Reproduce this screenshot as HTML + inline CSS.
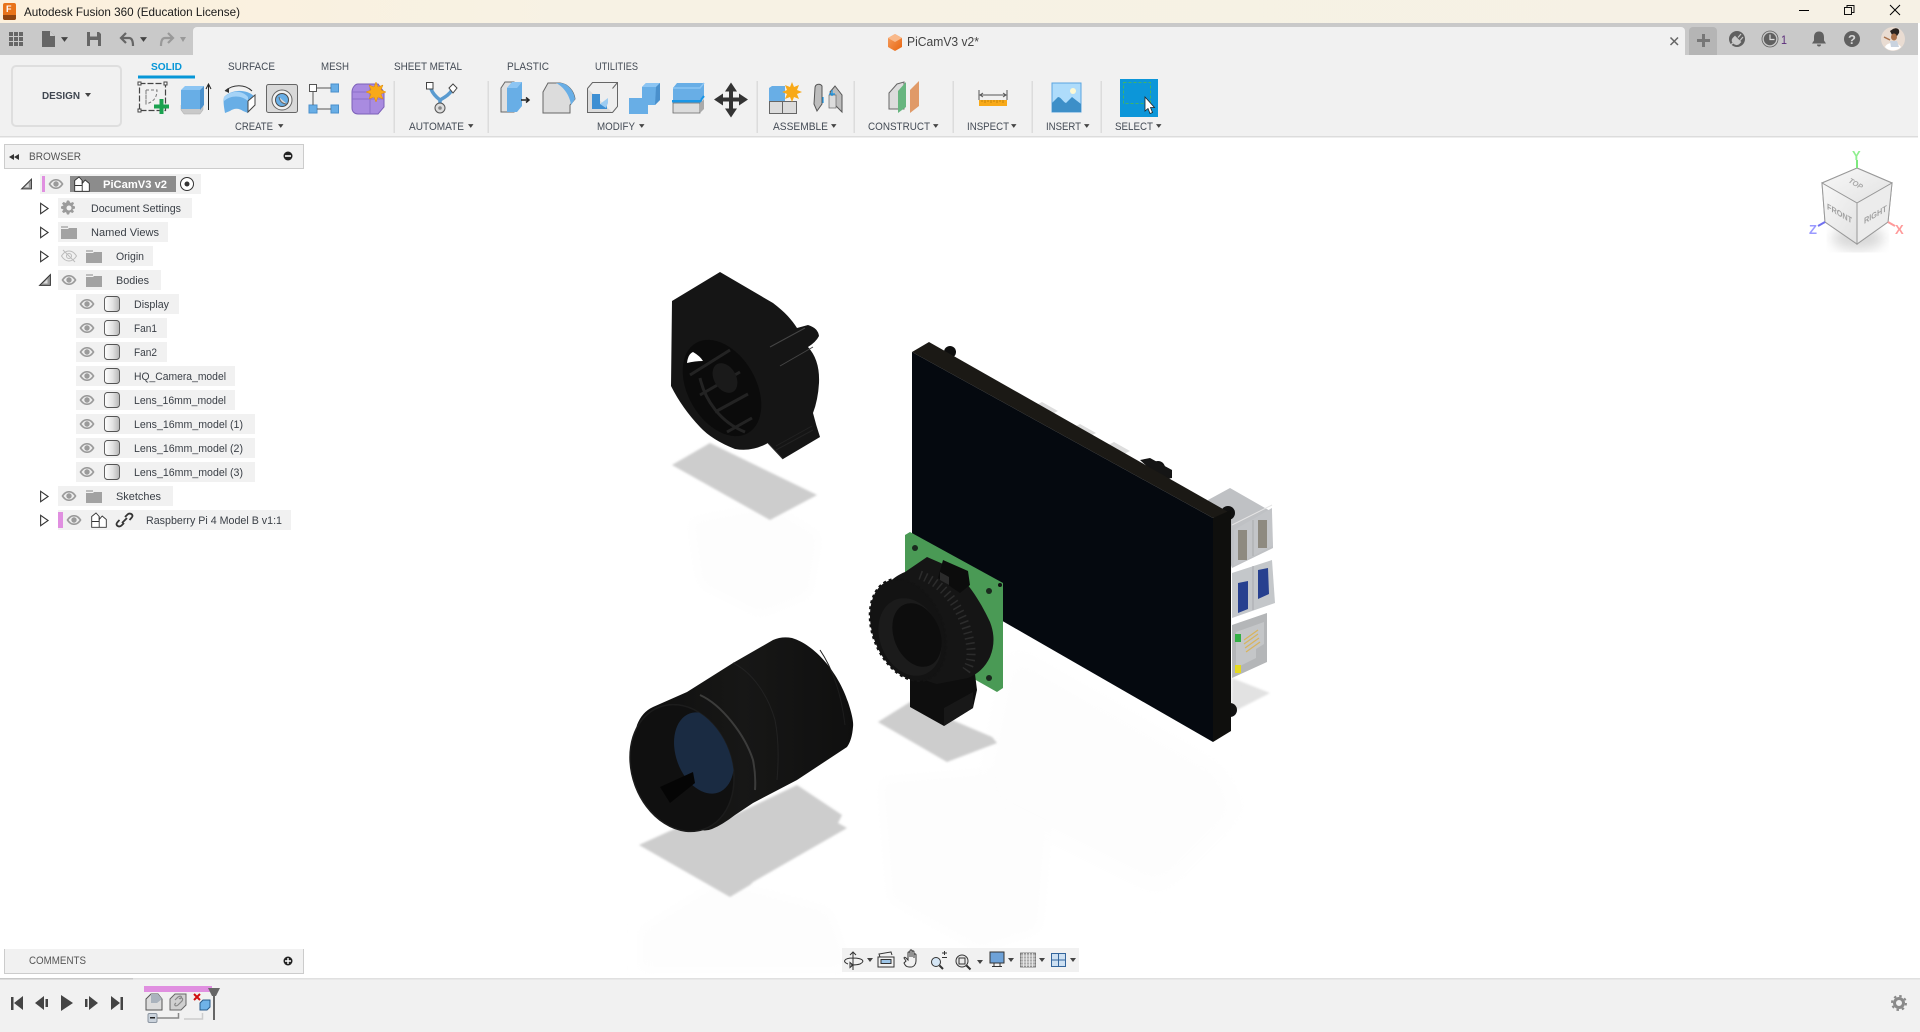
<!DOCTYPE html>
<html lang="en"><head><meta charset="utf-8"><title>Autodesk Fusion 360</title>
<style>
html,body{margin:0;padding:0;background:#fff;width:1920px;height:1032px;overflow:hidden}
svg{display:block}
text{font-family:"Liberation Sans",sans-serif;font-size:11px;fill:#3f4650}
.r{font-size:11px;fill:#444b55}
.b{font-size:11px;fill:#3a3f46}
</style></head><body>
<svg xmlns="http://www.w3.org/2000/svg" width="1920" height="1032" viewBox="0 0 1920 1032">
<defs>
<linearGradient id="tb" x1="0" x2="1" y1="0" y2="0"><stop offset="0" stop-color="#fcf0dc"/><stop offset=".3" stop-color="#f7f2e4"/><stop offset="1" stop-color="#f6f1e5"/></linearGradient>
<linearGradient id="cyl" x1="0" x2="1" y1="0" y2="0"><stop offset="0" stop-color="#fff"/><stop offset=".55" stop-color="#e2e2e2"/><stop offset="1" stop-color="#b5b5b5"/></linearGradient>
<linearGradient id="cf" x1="0" x2="1" y1="0" y2="1"><stop offset="0" stop-color="#f8f8f8"/><stop offset="1" stop-color="#e2e2e2"/></linearGradient>
<linearGradient id="cube" x1="0" y1="0" x2="1" y2="1"><stop offset="0" stop-color="#f6a062"/><stop offset="1" stop-color="#e8650f"/></linearGradient>
<linearGradient id="lens" x1="0" x2="1" y1="0" y2="0"><stop offset="0" stop-color="#0f0f0f"/><stop offset=".5" stop-color="#171716"/><stop offset="1" stop-color="#0f0f0f"/></linearGradient>
<filter id="s1"><feGaussianBlur stdDeviation="1"/></filter>
<filter id="s6"><feGaussianBlur stdDeviation="6"/></filter>
<filter id="s12"><feGaussianBlur stdDeviation="12"/></filter>
<symbol id="eye" viewBox="0 0 16 16" overflow="visible"><path d="M.5 8C3 4 5.500 3 8 3s5 1 7.500 5C13 12 10.500 13 8 13S3 12 .5 8z" fill="#9b9b9b"/><path d="M2.500 8C4.500 5.300 6 4.600 8 4.600s3.500.7 5.500 3.400C11.500 10.700 10 11.400 8 11.400S4.500 10.700 2.500 8z" fill="#eee"/><circle cx="8" cy="8" r="2.700" fill="#9b9b9b"/></symbol>
<symbol id="body" viewBox="0 0 16 16" overflow="visible"><rect x=".5" y=".5" width="15" height="15" rx="3" fill="url(#cyl)" stroke="#555" stroke-width=".9"/></symbol>
<symbol id="folder" viewBox="0 0 16 13" overflow="visible"><path d="M0 0h7v2H0z" fill="#bdbdbd"/><path d="M0 3h7l1-1h8v11H0z" fill="#a2a2a2"/></symbol>
<symbol id="comp" viewBox="0 0 16 16" overflow="visible"><path d="M.7 4.500 5 1l3.200 3.500v3l3-3.500 4.100 3.500V15.300H.7z" fill="#fff" stroke="#333" stroke-width=".9"/><path d="M8.200 4.500v10.800M.7 9.500h7.500" fill="none" stroke="#333" stroke-width=".9"/></symbol>
<symbol id="tr" viewBox="0 0 10 13" overflow="visible"><path d="M.7.7 9 6.500.7 12.300z" fill="#fff" stroke="#333" stroke-width="1.200"/></symbol>
<symbol id="td" viewBox="0 0 12 12" overflow="visible"><path d="M11.400.6V11.400H.6z" fill="#999" stroke="#333" stroke-width="1"/><path d="M8.500 5 8.500 9.500H4z" fill="#ddd"/></symbol>
<symbol id="arr" viewBox="0 0 6 4" overflow="visible"><path d="M0 0h6L3 4z" fill="#444"/></symbol>
</defs>

<!-- base -->
<rect width="1920" height="1032" fill="#fff"/>
<rect width="1920" height="23" fill="url(#tb)"/>
<rect y="23" width="1918" height="32" fill="#c9c9c9"/>
<rect x="0" y="55" width="1918" height="81" fill="#f1f1f1"/>
<path d="M193 55V31a4 4 0 0 1 4-4H1681a4 4 0 0 1 4 4V55z" fill="#f1f1f1"/>
<rect y="136" width="1918" height="1.500" fill="#dcdcdc"/>

<!-- title bar -->
<rect x="3" y="3" width="13" height="17" rx="2" fill="#e8731a"/><path d="M3 15h13v3a2 2 0 0 1-2 2H5a2 2 0 0 1-2-2z" fill="#8f4410"/>
<text x="6" y="12" style="font-size:9px;font-weight:bold;fill:#fff">F</text>
<text x="24" y="16" textLength="216" lengthAdjust="spacingAndGlyphs" style="font-size:12px;fill:#1a1a1a">Autodesk Fusion 360 (Education License)</text>
<path d="M1799 10.500h10" stroke="#000"/><path d="M1844.500 7.500h7v7h-7z" fill="none" stroke="#111"/><path d="M1847 7.500V5.500h7v7h-2.500" fill="none" stroke="#111"/><path d="M1890 5l10 10M1900 5l-10 10" stroke="#000"/>

<!-- quick access -->
<g fill="#666"><rect x="9" y="32" width="4" height="4"/><rect x="14" y="32" width="4" height="4"/><rect x="19" y="32" width="4" height="4"/><rect x="9" y="37" width="4" height="4"/><rect x="14" y="37" width="4" height="4"/><rect x="19" y="37" width="4" height="4"/><rect x="9" y="42" width="4" height="4"/><rect x="14" y="42" width="4" height="4"/><rect x="19" y="42" width="4" height="4"/></g>
<path d="M42 31h8l5 5v11H42z" fill="#666"/><path d="M50 31v5h5z" fill="#ccc"/><use href="#arr" x="61" y="37" width="7" height="5"/>
<path d="M87 32h12l2 2v12H87z" fill="#666"/><rect x="90" y="32" width="7" height="4.500" fill="#c9c9c9"/><rect x="90" y="40" width="8" height="6" fill="#c9c9c9"/>
<path d="M126 33l-5 5 5 5M121 38h8c3 0 4 3 4 8" fill="none" stroke="#666" stroke-width="2.200"/><use href="#arr" x="140" y="37" width="7" height="5"/>
<path d="M168 33l5 5-5 5M173 38h-8c-3 0-4 3-4 8" fill="none" stroke="#999" stroke-width="2.200"/><path d="M180 37h6l-3 5z" fill="#999"/>

<!-- document tab -->
<path d="M895 34l7 4v9l-7 4-7-4v-9z" fill="url(#cube)"/><path d="M888 38l7 4 7-4-7-4z" fill="#f9b98a"/>
<text x="907" y="46" textLength="72" lengthAdjust="spacingAndGlyphs" style="font-size:12.500px;fill:#444">PiCamV3 v2*</text>
<path d="M1670.500 37.500l7.500 7.500M1678 37.500l-7.500 7.500" stroke="#666" stroke-width="1.500"/>
<path d="M1689 55V31a4 4 0 0 1 4-4h20a4 4 0 0 1 4 4V55z" fill="#b5b5b5"/><path d="M1703.500 34v13M1697 40.500h13" stroke="#777" stroke-width="3"/>
<circle cx="1737" cy="39" r="8" fill="#606060"/><path d="M1741 34l-3 3.500M1743 37l-3 3.500M1735 36.500l5.500 5.500-2 2c-2 1-3.500.5-5-1s-1.500-3-.5-4.500z M1733 43l-2.500 2" fill="#c9c9c9" stroke="#c9c9c9" stroke-width="1.200"/>
<circle cx="1770" cy="39" r="8" fill="#c9c9c9" stroke="#606060" stroke-width=".8"/><circle cx="1770" cy="39" r="6.200" fill="#606060"/><path d="M1770 34.500V39.500h4.500" fill="none" stroke="#ddd" stroke-width="1.200"/>
<text x="1781" y="44" textLength="6" lengthAdjust="spacingAndGlyphs" style="font-size:12px;fill:#5a2b7a">1</text>
<path d="M1819 31.500c-4 0-5 3-5 6v3l-2 3h14l-2-3v-3c0-3-1-6-5-6zM1817 44.500a2 2 0 0 0 4 0z" fill="#606060"/>
<circle cx="1852" cy="39" r="8" fill="#606060"/><text x="1848" y="44" style="font-size:13px;font-weight:bold;fill:#d5d5d5">?</text>
<circle cx="1893" cy="39" r="12" fill="#e9dcd2"/><path d="M1885 47c2-5 12-6 16 0-3 4-12 5-16 0z" fill="#fff"/><path d="M1893 29c4-2 7 0 6 4l-2 3-5-1-2-4z" fill="#2a2320"/><ellipse cx="1894" cy="37" rx="3" ry="3.500" fill="#a9714b"/><path d="M1890 41l7 0 2 6h-8z" fill="#c9d3df"/><path d="M1884 37l6 3" stroke="#a9714b" stroke-width="1.500"/>

<!-- DESIGN button -->
<rect x="12" y="66" width="109" height="60" rx="4" fill="#f1f1f1" stroke="#dedede" stroke-width="2"/>
<text x="42" y="99" textLength="38" lengthAdjust="spacingAndGlyphs" style="font-size:10.500px;font-weight:bold;fill:#3f4650">DESIGN</text><use href="#arr" x="85" y="93" width="6" height="4"/>

<!-- ribbon tabs -->
<text x="151" y="70" textLength="31" lengthAdjust="spacingAndGlyphs" style="font-size:10.500px;font-weight:bold;fill:#0696d7">SOLID</text>
<rect x="138" y="75.500" width="57" height="3" fill="#0696d7"/>
<text class="r" x="228" y="70" textLength="47" lengthAdjust="spacingAndGlyphs">SURFACE</text>
<text class="r" x="321" y="70" textLength="28" lengthAdjust="spacingAndGlyphs">MESH</text>
<text class="r" x="394" y="70" textLength="68" lengthAdjust="spacingAndGlyphs">SHEET METAL</text>
<text class="r" x="507" y="70" textLength="42" lengthAdjust="spacingAndGlyphs">PLASTIC</text>
<text class="r" x="595" y="70" textLength="43" lengthAdjust="spacingAndGlyphs">UTILITIES</text>

<!-- group labels -->
<text class="r" x="235" y="130" textLength="38" lengthAdjust="spacingAndGlyphs">CREATE</text><use href="#arr" x="278" y="124" width="5.500" height="4"/>
<text class="r" x="409" y="130" textLength="55" lengthAdjust="spacingAndGlyphs">AUTOMATE</text><use href="#arr" x="468" y="124" width="5.500" height="4"/>
<text class="r" x="597" y="130" textLength="38" lengthAdjust="spacingAndGlyphs">MODIFY</text><use href="#arr" x="639" y="124" width="5.500" height="4"/>
<text class="r" x="773" y="130" textLength="55" lengthAdjust="spacingAndGlyphs">ASSEMBLE</text><use href="#arr" x="831" y="124" width="5.500" height="4"/>
<text class="r" x="868" y="130" textLength="62" lengthAdjust="spacingAndGlyphs">CONSTRUCT</text><use href="#arr" x="933" y="124" width="5.500" height="4"/>
<text class="r" x="967" y="130" textLength="42" lengthAdjust="spacingAndGlyphs">INSPECT</text><use href="#arr" x="1011" y="124" width="5.500" height="4"/>
<text class="r" x="1046" y="130" textLength="35" lengthAdjust="spacingAndGlyphs">INSERT</text><use href="#arr" x="1084" y="124" width="5.500" height="4"/>
<text class="r" x="1115" y="130" textLength="38" lengthAdjust="spacingAndGlyphs">SELECT</text><use href="#arr" x="1156" y="124" width="5.500" height="4"/>

<!-- separators -->
<g fill="#dcdcdc"><rect x="393.500" y="81" width="1.500" height="52"/><rect x="487.500" y="81" width="1.500" height="52"/><rect x="756.500" y="81" width="1.500" height="52"/><rect x="853.500" y="81" width="1.500" height="52"/><rect x="952.500" y="81" width="1.500" height="52"/><rect x="1031.500" y="81" width="1.500" height="52"/><rect x="1100.500" y="81" width="1.500" height="52"/></g>

<!-- sketch -->
<rect x="139.500" y="83.500" width="26" height="27" fill="none" stroke="#444" stroke-width="1.200" stroke-dasharray="6 2"/>
<g fill="#fff" stroke="#444"><rect x="138" y="82" width="3" height="3"/><rect x="164" y="82" width="3" height="3"/><rect x="138" y="109" width="3" height="3"/></g>
<path d="M146 90h11c0 7-3 12-11 14zM146 90v14" fill="none" stroke="#777" stroke-dasharray="3 2"/>
<path d="M161.500 99v15M154 106.500h15" stroke="#1aa24f" stroke-width="4"/>
<!-- extrude -->
<path d="M181 105l0 5 3 4h16l3-4v-5z" fill="#c9c9c9" stroke="#aaa" stroke-width=".5"/><path d="M181 90h19v19H181z" fill="#68aee6"/><path d="M181 90l4-4h19l-4 4z" fill="#8cc5f3"/><path d="M200 90l4-4v19l-4 5z" fill="#4a90cc"/>
<path d="M208.500 110V85M206 89l2.500-5 2.500 5" fill="none" stroke="#222" stroke-width="1"/>
<!-- revolve -->
<path d="M224 97c8-8 22-8 30-1l-6 6v11l-5-2c-4-3-9-3-13 0l-5 2c-1-6-2-11-1-16z" fill="#68aee6"/><path d="M224 97c8-7 18-7 24 0l0 4c-7-6-17-6-24 0z" fill="#a5d3f7"/><path d="M248 101l7-6v10l-7 7z" fill="#fff" stroke="#444"/>
<path d="M225 91c8-7 20-7 27 0" fill="none" stroke="#333"/><path d="M225 91l4-3v5z" fill="#333"/>
<!-- hole -->
<rect x="266.500" y="84.500" width="31" height="28" rx="2" fill="#d9d9d9" stroke="#666"/><circle cx="282" cy="100" r="10" fill="#f1f1f1" stroke="#666"/><circle cx="282" cy="100" r="6.500" fill="#68aee6" stroke="#4a4a4a"/><path d="M279 97c1 5 4 7 8 7" fill="#d9d9d9" stroke="#666"/>
<!-- pattern -->
<rect x="309.500" y="84.500" width="7" height="7" fill="#fff" stroke="#555"/><rect x="331" y="84" width="7.500" height="8" fill="#68aee6" stroke="#4a90cc"/><rect x="309" y="105" width="8" height="8" fill="#68aee6" stroke="#4a90cc"/><rect x="331" y="105" width="7.500" height="8" fill="#68aee6" stroke="#4a90cc"/><path d="M317 88h14M313 92v13M317 109h14" stroke="#555"/>
<!-- form -->
<path d="M352 92c0-4 3-8 6-8h20l6 8v15l-6 7h-20c-3 0-6-2-6-6z" fill="#a98be0" stroke="#7c60b8"/><path d="M352 99h32M370 84v30M352 92h32" stroke="#8a6fc8" fill="none"/>
<path d="M376 82l2 5 5-2-2 5 5 2-5 2 2 5-5-2-2 5-2-5-5 2 2-5-5-2 5-2-2-5 5 2z" fill="#f8a918" stroke="#e08a00" stroke-width=".5"/>
<!-- automate -->
<path d="M431 89c2 5 5 8 9 11M452 90c-3 5-7 7-12 10M440 100v8" fill="none" stroke="#5a9bd0" stroke-width="3.500"/>
<rect x="426.500" y="82.500" width="6.500" height="6.500" fill="#fff" stroke="#444"/><path d="M449 88l4-4 4 4-4 5z" fill="#fff" stroke="#444"/><circle cx="440" cy="108" r="5" fill="#dcdcdc" stroke="#555"/><circle cx="440" cy="108" r="1.800" fill="#888"/>
<!-- press pull -->
<path d="M501 88l4-6h9v30h-13z" fill="#e0e0e0" stroke="#666"/><path d="M507 112V88l5-6h10v24l-5 6z" fill="#68aee6"/><path d="M507 88l5-6h10l-5 6z" fill="#8cc5f3"/><path d="M521 100h8M526 97.500l3 2.500-3 2.500" fill="none" stroke="#222" stroke-width="1.500"/>
<!-- fillet -->
<path d="M543 92l5-9h12c8 1 14 8 15 16l-5 6v8h-27z" fill="#dcdcdc" stroke="#666"/><path d="M556 83h5c7 1 13 8 14 16l-4 6c-1-9-7-18-15-22z" fill="#68aee6"/>
<!-- shell -->
<rect x="587.500" y="88.500" width="25" height="24" fill="#dcdcdc" stroke="#666"/><path d="M587.500 88.500l5-6h25v24l-5 6M612.500 88.500l5-6" fill="#eee" stroke="#666"/><path d="M592 94h8v10h7v5H592z" fill="#3d8fd3"/><path d="M600 104l8-6v5l-2 5z" fill="#9cccf2"/>
<!-- combine -->
<path d="M629 98h13V87l4-4h14v17l-5 5h-7v9h-19z" fill="#68aee6"/><path d="M642 87l4-4h14l-4 4z" fill="#8cc5f3"/><path d="M656 87l4-4v17l-5 5z" fill="#4a90cc"/>
<!-- offset -->
<path d="M673 88l4-5h27v14l-4 5h-27z" fill="#68aee6"/><path d="M673 88h27l4-5" fill="none" stroke="#8cc5f3" stroke-width="1.500"/><rect x="672" y="100" width="30" height="2.500" fill="#1a96e6"/><path d="M701 100l3-4" stroke="#1a96e6" stroke-width="2"/><path d="M673 103h27v10h-27z" fill="#dcdcdc" stroke="#666" stroke-width=".8"/><path d="M700 103l4-4v10l-4 4z" fill="#aaa"/>
<!-- move -->
<path d="M731 82.500l6 9h-4v6h6v-4l9 6-9 6v-4h-6v7h4l-6 9-6-9h4v-7h-6v4l-9-6 9-6v4h6v-6h-4z" fill="#333"/>
<!-- assemble -->
<rect x="769.500" y="101.500" width="15" height="12" fill="#dcdcdc" stroke="#666"/><rect x="782.500" y="101.500" width="14" height="12" fill="#dcdcdc" stroke="#666"/><path d="M769 88l3-2h13v15h-16z" fill="#68aee6"/>
<path d="M792 82l2 5 5-2-2 5 5 2-5 2 2 5-5-2-2 5-2-5-5 2 2-5-5-2 5-2-2-5 5 2z" fill="#f8a918"/>
<!-- joint -->
<path d="M815 88c0-4 5-5 7-2v18l-5 7-3-7z" fill="#bdbdbd" stroke="#555"/><path d="M830 92l5-6 7 9v17l-7-7z" fill="#bdbdbd" stroke="#555"/><rect x="829" y="95" width="7" height="13" fill="#dcdcdc" stroke="#666" stroke-width=".7"/>
<path d="M823 97v6M832 90v6M829 94h6" stroke="#1a96e6" stroke-width="1.200"/>
<!-- construct -->
<path d="M889 93l8-9 7-2v27H889z" fill="#dcdcdc" stroke="#666"/><path d="M898 91l8-9v25l-8 6z" fill="#67b57f"/><path d="M910 90l9-9v25l-9 7z" fill="#e09a68"/>
<!-- inspect -->
<path d="M979 90v10M1007 90v10" stroke="#555"/><path d="M980 95h26" stroke="#555"/><path d="M983 93l-3 2 3 2M1003 93l3 2-3 2" fill="none" stroke="#555"/><rect x="979" y="100" width="28" height="6" fill="#f8a918"/><path d="M982 100v2M985 100v3M988 100v2M991 100v3M994 100v2M997 100v3M1000 100v2M1003 100v3" stroke="#b07500" stroke-width=".7"/>
<!-- insert -->
<rect x="1052" y="83" width="29" height="29" fill="#aedcfb" stroke="#5aa5e0"/><circle cx="1073" cy="91" r="3" fill="#fdf8d3"/><path d="M1052 112v-9l6-6c3 0 5 5 8 6l6-6 9 7v8z" fill="#3d8fc8"/>
<!-- select -->
<rect x="1120" y="79" width="38" height="38" fill="#0c96d9"/><rect x="1123.500" y="82.500" width="27" height="21" fill="none" stroke="#3fb26a" stroke-dasharray="3 2"/>
<path d="M1145 97v14l3-2.500 2 5 2.500-1-2-5h4z" fill="#fff" stroke="#222" stroke-width=".8"/>

<!-- reflections -->
<g fill="#fdfdfd"><path d="M690 520l80-15 50 30-10 60-50 20-60-30z" filter="url(#s6)"/><path d="M880 780l120-10 50 40-10 120-60 20-90-50z" filter="url(#s6)"/><path d="M640 930l80-50 110 30 20 60H640z" filter="url(#s6)"/><path d="M1010 650l210 120 20 40-80 80-180-90z" filter="url(#s12)"/></g>

<!-- fan -->
<path d="M710 443l107 52-47 25-98-55z" fill="#cdcdcd" filter="url(#s1)"/>
<path d="M672 301L720 272L773 303C785 312 792 320 797 328L808 325Q818 328 819 336Q816 342 808 347Q820 360 819 383Q818 400 813 413Q816 425 820 437L783 459L768 443Q752 452 735 449Q712 440 700 427Q682 408 671 386Z" fill="#151515"/>
<path d="M770 347L805 328M780 366L813 347" stroke="#454545" stroke-width="1"/>
<path d="M783 459L768 443" stroke="#2a2a2a"/><path d="M776 446l36-20M776 450l37-20" stroke="#222" stroke-width="1"/>
<ellipse cx="722" cy="388" rx="34" ry="52" transform="rotate(-30 722 388)" fill="#0b0b0b"/>
<path d="M687 363Q688 354 693 352Q700 356 703 361Q695 361 687 363z" fill="#fff"/>
<path d="M690 375l40-25M700 395l40-23M715 412l33-18M727 432l25-14M700 378c5 22 20 44 45 54" stroke="#232323" stroke-width="3" fill="none"/>
<ellipse cx="725" cy="378" rx="11" ry="16" transform="rotate(-30 725 378)" fill="#1a1a1a"/>

<!-- large lens -->
<path d="M639 845l44-20 47-8 67-32 45 30-4 8 9 5-94 54-3 3-20 12z" fill="#cdcdcd" filter="url(#s1)"/>
<path d="M653 707L687 692L733 663L773 640Q782 636 792 638C815 645 838 672 848 702Q854 720 853 727Q852 740 847 747L797 780L753 803L735 815Q722 825 712 829Q705 832 697 829C675 818 650 795 640 765Q632 745 637 725Q642 712 653 707Z" fill="url(#lens)"/>
<path d="M700 695C722 705 745 735 753 760Q756 775 755 790" fill="none" stroke="#3c3c3b" stroke-width="2"/>
<path d="M733 663C752 672 768 695 775 720Q780 745 777 780" fill="none" stroke="#222" stroke-width="1"/>
<path d="M820 650C835 672 842 700 845 725" fill="none" stroke="#1d1d1d" stroke-width="1"/>
<clipPath id="cp"><ellipse cx="682" cy="768" rx="50" ry="65" transform="rotate(-20 682 768)"/></clipPath>
<ellipse cx="682" cy="768" rx="50" ry="65" transform="rotate(-20 682 768)" fill="#101010" stroke="#1c1c1c" stroke-width="1.500"/>
<g clip-path="url(#cp)"><ellipse cx="704" cy="753" rx="28" ry="42" transform="rotate(-20 704 753)" fill="#1a2b42"/><path d="M660 787l33-15 2 11-25 20z" fill="#050505"/></g>

<!-- pi connectors -->
<path d="M1232 678l38 15-39 20z" fill="#e2e2e2" filter="url(#s1)"/>
<path d="M1208 500l22-12 42 24 1 36-41 20z" fill="#bfc1c4"/><path d="M1232 525l40-20" stroke="#e4e4e4" fill="none"/>
<path d="M1234 530l38-22v38l-38 20z" fill="#c3c5c8"/><path d="M1253 520v36" stroke="#a8aaad" stroke-width="1"/>
<rect x="1238" y="530" width="9" height="30" fill="#8e8a80"/><rect x="1258" y="520" width="9" height="28" fill="#8e8a80"/>
<path d="M1232 573l40-13 3 43-43 15z" fill="#c4c7ca"/><path d="M1253 566v44" stroke="#a8aaad" stroke-width="1"/>
<path d="M1238 583l10-2v28l-10 4z" fill="#27408f"/><path d="M1258 570l10-2 1 26-11 5z" fill="#27408f"/>
<path d="M1232 625l35-12v49l-35 16z" fill="#b4b6b8"/><path d="M1236 632l28-10v22l-8 5v9l-20 10z" fill="#c4c6c8"/>
<rect x="1235" y="634" width="6" height="8" fill="#33b044"/><rect x="1235" y="665" width="6" height="8" fill="#e4d920"/>
<path d="M1244 640l14-10M1244 644l14-10M1245 648l14-10M1246 652l14-10" stroke="#d9b45c" stroke-width="1.200"/>

<!-- display -->
<circle cx="950" cy="352" r="6" fill="#0e0e0e"/><circle cx="1158" cy="468" r="7" fill="#111"/><path d="M1140 460l10-2 22 12 0 8-10 2z" fill="#151515"/>
<path d="M1036 405l16 9 6-3-16-9zM1074 427l16 9 6-3-16-9zM1108 445l16 9 6-3-16-9z" fill="#ddd"/>
<circle cx="1228" cy="513" r="7" fill="#111"/><circle cx="1230" cy="710" r="7" fill="#111"/>
<path d="M912 352l17-10 301 171-17 5z" fill="#1b1915"/>
<path d="M1213 518l18-8v221l-18 11z" fill="#0f0f0d"/>
<path d="M912 352l301 166v224L912 569z" fill="#05090f"/>

<!-- camera -->
<path d="M878 722l32-20 82 35 5 6-50 19-7-4z" fill="#cdcdcd" filter="url(#s1)"/>
<path d="M905 535l5-3 93 51v105l-6 4-92-52z" fill="#4a9a55"/>
<circle cx="915" cy="548" r="3" fill="#1a2a1e"/><circle cx="989" cy="591" r="3" fill="#1a2a1e"/><circle cx="989" cy="678" r="3" fill="#1a2a1e"/>
<circle cx="1000" cy="585" r="2" fill="#111"/>
<path d="M910 675v32l34 19 29-18 4-18-2-16-7-20z" fill="#0e0e0e"/><path d="M944 726v-18l29-16v16z" fill="#181818"/>
<path d="M873 610C878 592 890 578 905 572L927 557L950 567C965 578 980 600 990 622Q997 640 990 657Q983 672 968 678L937 684Q920 680 908 668L883 647Q870 630 873 610z" fill="#151515"/>
<path d="M943 560l25 11 2 14-10 8-22-15z" fill="#0c0c0c"/><path d="M940 572l9 5v8l-9-5z" fill="#2b2b2b"/>
<path d="M920 575c22 8 38 28 46 52s6 38-2 46" fill="none" stroke="#2c2c2c" stroke-width="9" stroke-dasharray="1.500 4"/>
<ellipse cx="908" cy="630" rx="35" ry="53" transform="rotate(-22 908 630)" fill="#131313"/>
<ellipse cx="908" cy="630" rx="35" ry="53" transform="rotate(-22 908 630)" fill="none" stroke="#131313" stroke-width="2.500" stroke-dasharray="3 3"/>
<ellipse cx="910" cy="637" rx="30" ry="40" transform="rotate(-22 910 637)" fill="#1b1b1b"/>
<ellipse cx="917" cy="635" rx="23" ry="33" transform="rotate(-22 917 635)" fill="#0d0d0d"/>

<!-- view cube -->
<ellipse cx="1858" cy="238" rx="26" ry="12" fill="#d8d8d8" filter="url(#s6)"/>
<path d="M1857 168l35 15-4 39-31 22-32-22-3-39z" fill="#f0f0f0" stroke="#999"/>
<path d="M1857 168l35 15-35 20-35-20z" fill="url(#cf)" stroke="#999"/>
<path d="M1822 183l35 20v41l-32-22z" fill="url(#cf)" stroke="#999"/>
<path d="M1892 183l-35 20v41l31-22z" fill="#ececec" stroke="#999"/>
<path d="M1857 160v8" stroke="#7ee87e" stroke-width="2"/>
<text x="1852" y="160" style="font-size:13px;font-weight:bold;fill:#8fef8f">Y</text>
<path d="M1888 222l7 4" stroke="#ff9a9a" stroke-width="2"/><text x="1895" y="234" style="font-size:13px;font-weight:bold;fill:#ff9a9a">X</text>
<path d="M1825 222l-7 4" stroke="#7070f0" stroke-width="2"/><text x="1809" y="234" style="font-size:13px;font-weight:bold;fill:#9a9aff">Z</text>
<g style="font-weight:bold"><text transform="matrix(.85 .5 -.5 .85 1848 182)" style="font-size:7.500px;fill:#a8a8a8;font-style:italic">TOP</text>
<text transform="matrix(.86 .5 0 1 1827 209)" style="font-size:8.500px;fill:#a0a0a0">FRONT</text>
<text transform="matrix(.86 -.5 0 1 1864 224)" style="font-size:8.500px;fill:#a0a0a0">RIGHT</text></g>

<!-- Browser panel -->
<rect x="4.500" y="144.500" width="299" height="24" fill="#f1f1f1" stroke="#ccc"/>
<path d="M14 154l-5 3 5 3zM19 154l-5 3 5 3z" fill="#333"/>
<text x="29" y="160" textLength="52" lengthAdjust="spacingAndGlyphs" style="font-size:11px;fill:#555">BROWSER</text>
<circle cx="288" cy="156" r="4.500" fill="#222"/><rect x="285" y="155.200" width="6" height="1.600" fill="#fff"/>

<!-- rows -->
<g fill="#f1f1f1">
<rect x="40" y="174" width="161" height="20"/><rect x="58" y="198" width="134" height="20"/><rect x="58" y="222" width="110" height="20"/><rect x="58" y="246" width="95" height="20"/><rect x="58" y="270" width="103" height="20"/>
<rect x="76" y="294" width="103" height="20"/><rect x="76" y="318" width="91" height="20"/><rect x="76" y="342" width="91" height="20"/><rect x="76" y="366" width="159" height="20"/><rect x="76" y="390" width="159" height="20"/><rect x="76" y="414" width="179" height="20"/><rect x="76" y="438" width="179" height="20"/><rect x="76" y="462" width="179" height="20"/>
<rect x="58" y="486" width="115" height="20"/><rect x="58" y="510" width="233" height="20"/></g>
<rect x="70" y="176" width="106" height="16" fill="#8c8c8c"/>
<rect x="42" y="176" width="3" height="16" fill="#e08fe0"/>
<rect x="58" y="512" width="5" height="16" fill="#e08fe0"/>
<use href="#td" x="21" y="178" width="11" height="12"/>
<use href="#eye" x="48" y="176" width="16" height="16"/>
<use href="#comp" x="74" y="176" width="16" height="16"/>
<text x="103" y="188" textLength="64" lengthAdjust="spacingAndGlyphs" style="font-size:11px;font-weight:bold;fill:#fff">PiCamV3 v2</text>
<circle cx="187" cy="184" r="6.500" fill="#fff" stroke="#333"/><circle cx="187" cy="184" r="2.500" fill="#333"/>

<use href="#tr" x="40" y="202" width="9" height="13"/>
<path d="M69 200l1.500 2.500 2.500-1 1 1.500-1.500 2 2.500 1v2l-2.500 1 1.500 2-1.500 1.500-2.500-1-1 2.500h-2l-1-2.500-2.500 1-1.500-1.500 1.500-2-2.500-1v-2l2.500-1-1.500-2 1.500-1.500 2.500 1 1-2.500z" fill="#9b9b9b" transform="translate(0 .5)"/><circle cx="69" cy="208" r="2.500" fill="#f1f1f1"/>
<text class="b" x="91" y="212" textLength="90" lengthAdjust="spacingAndGlyphs">Document Settings</text>

<use href="#tr" x="40" y="226" width="9" height="13"/>
<use href="#folder" x="61" y="226" width="16" height="13"/>
<text class="b" x="91" y="236" textLength="68" lengthAdjust="spacingAndGlyphs">Named Views</text>

<use href="#tr" x="40" y="250" width="9" height="13"/>
<g transform="translate(61 248)"><path d="M.5 8C3 4 5.500 3 8 3s5 1 7.500 5C13 12 10.500 13 8 13S3 12 .5 8z" fill="none" stroke="#bbb"/><circle cx="8" cy="8" r="2.500" fill="none" stroke="#bbb"/><path d="M2 2l12 12" stroke="#bbb"/></g>
<use href="#folder" x="86" y="250" width="16" height="13"/>
<text class="b" x="116" y="260" textLength="28" lengthAdjust="spacingAndGlyphs">Origin</text>

<use href="#td" x="39" y="274" width="12" height="12"/>
<use href="#eye" x="61" y="272" width="16" height="16"/>
<use href="#folder" x="86" y="274" width="16" height="13"/>
<text class="b" x="116" y="284" textLength="33" lengthAdjust="spacingAndGlyphs">Bodies</text>

<g id="bd">
<use href="#eye" x="79" y="296" width="16" height="16"/><use href="#body" x="104" y="296" width="16" height="16"/>
<use href="#eye" x="79" y="320" width="16" height="16"/><use href="#body" x="104" y="320" width="16" height="16"/>
<use href="#eye" x="79" y="344" width="16" height="16"/><use href="#body" x="104" y="344" width="16" height="16"/>
<use href="#eye" x="79" y="368" width="16" height="16"/><use href="#body" x="104" y="368" width="16" height="16"/>
<use href="#eye" x="79" y="392" width="16" height="16"/><use href="#body" x="104" y="392" width="16" height="16"/>
<use href="#eye" x="79" y="416" width="16" height="16"/><use href="#body" x="104" y="416" width="16" height="16"/>
<use href="#eye" x="79" y="440" width="16" height="16"/><use href="#body" x="104" y="440" width="16" height="16"/>
<use href="#eye" x="79" y="464" width="16" height="16"/><use href="#body" x="104" y="464" width="16" height="16"/>
</g>
<text class="b" x="134" y="308" textLength="35" lengthAdjust="spacingAndGlyphs">Display</text>
<text class="b" x="134" y="332" textLength="23" lengthAdjust="spacingAndGlyphs">Fan1</text>
<text class="b" x="134" y="356" textLength="23" lengthAdjust="spacingAndGlyphs">Fan2</text>
<text class="b" x="134" y="380" textLength="92" lengthAdjust="spacingAndGlyphs">HQ_Camera_model</text>
<text class="b" x="134" y="404" textLength="92" lengthAdjust="spacingAndGlyphs">Lens_16mm_model</text>
<text class="b" x="134" y="428" textLength="109" lengthAdjust="spacingAndGlyphs">Lens_16mm_model (1)</text>
<text class="b" x="134" y="452" textLength="109" lengthAdjust="spacingAndGlyphs">Lens_16mm_model (2)</text>
<text class="b" x="134" y="476" textLength="109" lengthAdjust="spacingAndGlyphs">Lens_16mm_model (3)</text>

<use href="#tr" x="40" y="490" width="9" height="13"/>
<use href="#eye" x="61" y="488" width="16" height="16"/>
<use href="#folder" x="86" y="490" width="16" height="13"/>
<text class="b" x="116" y="500" textLength="45" lengthAdjust="spacingAndGlyphs">Sketches</text>

<use href="#tr" x="40" y="514" width="9" height="13"/>
<use href="#eye" x="66" y="512" width="16" height="16"/>
<use href="#comp" x="91" y="512" width="16" height="16"/>
<path d="M125 517l2.500-2.500c2-2 5-.5 5 1.500 0 1-1 2-3 4M124 523l-2.500 2.500c-2 2-5 .5-5-1.500 0-1 1-2 3-4M122 523l5-5" fill="none" stroke="#333" stroke-width="1.800"/>
<text class="b" x="146" y="524" textLength="136" lengthAdjust="spacingAndGlyphs">Raspberry Pi 4 Model B v1:1</text>

<!-- Comments -->
<path d="M4.500 949v24.500h299V949" fill="#f1f1f1" stroke="#ccc"/>
<text x="29" y="964" textLength="57" lengthAdjust="spacingAndGlyphs" style="font-size:11px;fill:#555">COMMENTS</text>
<circle cx="288" cy="961" r="4.500" fill="#222"/><path d="M285 961h6M288 958v6" stroke="#fff" stroke-width="1.400"/>

<!-- navbar -->
<rect x="842" y="948" width="237" height="24" fill="#f1f1f1"/>
<g fill="none" stroke="#333" stroke-width="1">
<path d="M853 952v18M850 955l3-3 3 3M848 964c-6-2-4-6 5-6s13 3 7 6c-3 1-6 1-9 1M853 965l-3-2.500v5z"/>
<path d="M878 957h16v10h-16zM880 957l-1-3 12-2 1 3"/><rect x="881" y="959.500" width="10" height="4" fill="#9ec6e8"/>
<path d="M906 961l-2-3c0-1 1-1 2 0l2 2v-7c0-1.500 2-1.500 2 0v4-6c0-1.500 2-1.500 2 0v6-5c0-1.500 2-1.500 2 0v6-3c0-1.500 2-1.500 2 0v6c0 3-2 6-5 6h-2c-3 0-4-2-5-4z"/>
<circle cx="936" cy="962" r="4.500" fill="#d5e6f5"/><path d="M939.500 965.500l3.500 3.500" stroke-width="2"/><path d="M942 953h5M944.500 951v4M942 957.500h5"/>
<circle cx="962" cy="961" r="6" fill="#e8e8e8"/><rect x="959" y="958" width="6" height="6"/><path d="M966.500 965.500l4 4" stroke-width="2"/>
<rect x="990" y="952" width="14" height="11" fill="#6ea2d8"/><path d="M994 963v3M1000 963v3M992 966.500h10"/>
</g>
<use href="#arr" x="867" y="958" width="6" height="4"/><use href="#arr" x="977" y="960" width="6" height="4"/><use href="#arr" x="1008" y="958" width="6" height="4"/><use href="#arr" x="1039" y="958" width="6" height="4"/><use href="#arr" x="1070" y="958" width="6" height="4"/>
<g fill="none" stroke="#666" stroke-width=".8"><rect x="1020.500" y="953" width="15" height="14" fill="#aaa"/><path d="M1023.500 953v14M1026.500 953v14M1029.500 953v14M1032.500 953v14M1020.500 956h15M1020.500 959h15M1020.500 962h15M1020.500 965h15" stroke="#eee"/></g>
<rect x="1051.500" y="953.500" width="14" height="13" fill="#cde0f2" stroke="#34659c"/><path d="M1058.500 953.500v13M1051.500 960h14" stroke="#34659c"/>

<!-- bottom bar -->
<rect y="978" width="1920" height="54" fill="#f1f1f1"/>
<rect y="978" width="1920" height="1.500" fill="#e0e0e0"/><rect y="978" width="133" height="1.500" fill="#c8c8c8"/>
<g fill="#444">
<rect x="11" y="997" width="2.500" height="13"/><path d="M23 996v14l-9-7z"/>
<path d="M44 996v14l-9-7z"/><rect x="45.500" y="999" width="2.500" height="8"/>
<path d="M61 995v16l12-8z"/>
<rect x="85" y="999" width="2.500" height="8"/><path d="M89 996v14l9-7z"/>
<path d="M111 996v14l9-7z"/><rect x="120.500" y="997" width="2.500" height="13"/>
</g>
<rect x="144" y="986" width="68" height="6" fill="#e08fe0"/>
<path d="M208 988h12l-4 8h-4z" fill="#666"/><rect x="213" y="995" width="2" height="25" fill="#666"/>
<path d="M146 999l5-5h7l4 5v11h-16z" fill="#dcdcdc" stroke="#555"/><path d="M151 994h7l4 5-5 4h-6z" fill="#aab3bd"/>
<path d="M170 999l5-5h11v11l-5 5h-11z" fill="#d0d0d0" stroke="#666"/><path d="M176 1003c-3 2 0 4 2 2l4-4c2-3-1-4-3-2M180 999c3-2 1-4-2-2l-3 3" fill="none" stroke="#888" stroke-width="1.200"/>
<path d="M194 994l6 6M200 994l-6 6" stroke="#d01010" stroke-width="2"/>
<path d="M200 1003l3-3h7v7l-3 3h-7z" fill="#6fb3e8" stroke="#2a5c8a"/>
<rect x="148" y="1013.500" width="9" height="9" rx="1.500" fill="#cbd3dc" stroke="#8a94a0"/><rect x="150" y="1017" width="5" height="1.500" fill="#222"/>
<path d="M157 1018h21.500v-5" fill="none" stroke="#888" stroke-width="1.500"/>
<path d="M184 1019h18.500v-6" fill="none" stroke="#ccc" stroke-width="1.500"/>
<circle cx="1899" cy="1003" r="4.500" fill="none" stroke="#8a8a8a" stroke-width="3"/><circle cx="1899" cy="1003" r="7" fill="none" stroke="#8a8a8a" stroke-width="2" stroke-dasharray="2.500 3"/>
</svg>
</body></html>
